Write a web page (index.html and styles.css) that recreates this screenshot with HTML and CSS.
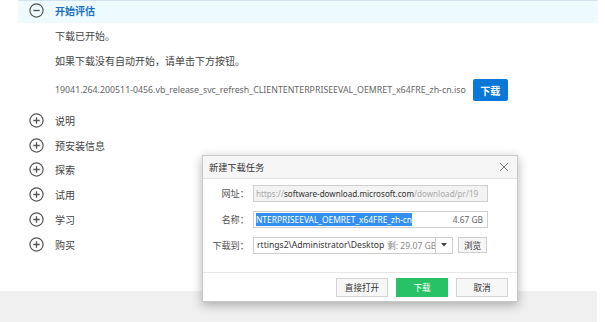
FILE: index.html
```html
<!DOCTYPE html>
<html lang="zh-CN">
<head>
    <meta charset="UTF-8">
    <title>下载 Windows 10 企业版评估</title>
    <link rel="stylesheet" href="styles.css">
</head>
<body>
    <div class="page">
        <div class="sec-head">
            <span class="ico">
                <svg width="15" height="15" viewBox="0 0 15 15"><circle cx="7.5" cy="7.5" r="6.6" fill="none" stroke="#555" stroke-width="1.2"/><path d="M4.3 7.5h6.4" stroke="#555" stroke-width="1.3"/></svg>
            </span>
            <span class="sec-title">开始评估</span>
        </div>
        <div class="sec-body">
            <p class="txt first">下载已开始。</p>
            <p class="txt">如果下载没有自动开始，请单击下方按钮。</p>
            <div class="file-row">
                <span class="file-name">19041.264.200511-0456.vb_release_svc_refresh_CLIENTENTERPRISEEVAL_OEMRET_x64FRE_zh-cn.iso</span>
                <span class="btn-blue">下载</span>
            </div>
        </div>
        <ul class="acc">
            <li class="acc-item"><span class="ico plus"><svg width="15" height="15" viewBox="0 0 15 15"><circle cx="7.5" cy="7.5" r="6.6" fill="none" stroke="#555" stroke-width="1.2"/><path d="M4.3 7.5h6.4M7.5 4.3v6.4" stroke="#555" stroke-width="1.3"/></svg></span>说明</li>
            <li class="acc-item"><span class="ico plus"><svg width="15" height="15" viewBox="0 0 15 15"><circle cx="7.5" cy="7.5" r="6.6" fill="none" stroke="#555" stroke-width="1.2"/><path d="M4.3 7.5h6.4M7.5 4.3v6.4" stroke="#555" stroke-width="1.3"/></svg></span>预安装信息</li>
            <li class="acc-item"><span class="ico plus"><svg width="15" height="15" viewBox="0 0 15 15"><circle cx="7.5" cy="7.5" r="6.6" fill="none" stroke="#555" stroke-width="1.2"/><path d="M4.3 7.5h6.4M7.5 4.3v6.4" stroke="#555" stroke-width="1.3"/></svg></span>探索</li>
            <li class="acc-item"><span class="ico plus"><svg width="15" height="15" viewBox="0 0 15 15"><circle cx="7.5" cy="7.5" r="6.6" fill="none" stroke="#555" stroke-width="1.2"/><path d="M4.3 7.5h6.4M7.5 4.3v6.4" stroke="#555" stroke-width="1.3"/></svg></span>试用</li>
            <li class="acc-item"><span class="ico plus"><svg width="15" height="15" viewBox="0 0 15 15"><circle cx="7.5" cy="7.5" r="6.6" fill="none" stroke="#555" stroke-width="1.2"/><path d="M4.3 7.5h6.4M7.5 4.3v6.4" stroke="#555" stroke-width="1.3"/></svg></span>学习</li>
            <li class="acc-item"><span class="ico plus"><svg width="15" height="15" viewBox="0 0 15 15"><circle cx="7.5" cy="7.5" r="6.6" fill="none" stroke="#555" stroke-width="1.2"/><path d="M4.3 7.5h6.4M7.5 4.3v6.4" stroke="#555" stroke-width="1.3"/></svg></span>购买</li>
        </ul>
    </div>
    <div class="foot"></div>

    <!-- 新建下载任务 弹窗 -->
    <div class="dlg">
        <div class="dlg-title">
            <span>新建下载任务</span>
            <svg class="dlg-close" width="10" height="10" viewBox="0 0 10 10"><path d="M1 1l8 8M9 1l-8 8" stroke="#777" stroke-width="1"/></svg>
        </div>
        <div class="dlg-body">
            <div class="frow">
                <label class="flabel">网址：</label>
                <div class="finput ro"><span class="dim">https://</span><span class="host">software-download.microsoft.com</span><span class="dim">/download/pr/19</span></div>
            </div>
            <div class="frow">
                <label class="flabel">名称：</label>
                <div class="finput name"><span class="sel">NTERPRISEEVAL_OEMRET_x64FRE_zh-cn</span><span class="size">4.67 GB</span></div>
            </div>
            <div class="frow">
                <label class="flabel">下载到：</label>
                <div class="combo">
                    <div class="combo-text"><span>rttings2\Administrator\Desktop</span><span class="free">剩: 29.07 GB</span></div>
                    <div class="combo-arrow"><svg width="6" height="4" viewBox="0 0 6 4"><path d="M0 0h6L3 3.5z" fill="#444"/></svg></div>
                </div>
                <span class="btn-small">浏览</span>
            </div>
        </div>
        <div class="dlg-foot">
            <span class="btn">直接打开</span>
            <span class="btn green">下载</span>
            <span class="btn">取消</span>
        </div>
    </div>
</body>
</html>
```

FILE: styles.css
```css
*{
    margin: 0;
    padding: 0;
    box-sizing: border-box;
}
body{
    width: 605px;
    height: 322px;
    overflow: hidden;
    background: #fff;
    font-family: "Noto Sans", "Noto Sans CJK SC", sans-serif;
    font-size: 10px;
    color: #444;
    position: relative;
}
.page{
    margin-left: 18px;
    width: 580px;
}
.sec-head{
    height: 23px;
    background: #edfbff;
    border-top: 1px solid #d3e4ee;
    display: flex;
    align-items: center;
    padding: 0 0 3px 11px;
}
.ico{
    display: flex;
    width: 15px;
    height: 15px;
    margin-right: 11px;
}
.sec-title{
    color: #1a70c0;
    font-weight: bold;
    font-size: 10px;
}
.sec-body{
    padding-left: 37px;
}
.txt{
    line-height: 16px;
    margin-top: 9px;
    color: #444;
}
.txt.first{
    margin-top: 5px;
}
.file-row{
    display: flex;
    align-items: center;
    margin-top: 10px;
    height: 22px;
}
.file-name{
    font-size: 8.8px;
    color: #666;
    white-space: nowrap;
}
.btn-blue{
    margin-left: 7px;
    width: 35px;
    height: 22px;
    background: #0b78d7;
    color: #fff;
    font-weight: bold;
    display: flex;
    align-items: center;
    justify-content: center;
    border-radius: 2px;
}
.acc{
    list-style: none;
    margin-top: 7px;
}
.acc-item{
    height: 24.8px;
    display: flex;
    align-items: center;
    padding-left: 11px;
}
.foot{
    margin-top: 34px;
    width: 597px;
    height: 40px;
    background: #f0f0f0;
}

.dlg{
    position: absolute;
    left: 202px;
    top: 155px;
    width: 316px;
    height: 147px;
    background: #fff;
    border: 1px solid #c8c8c8;
    box-shadow: 0 3px 10px rgba(0,0,0,.3);
    font-size: 9.2px;
    color: #333;
}
.dlg-title{
    height: 23px;
    background: #f6f6f6;
    border-bottom: 1px solid #e2e2e2;
    display: flex;
    align-items: center;
    justify-content: space-between;
    padding: 0 8px 0 6px;
}
.dlg-body{
    padding-top: 6px;
    height: 94px;
    border-bottom: 1px solid #e6e6e6;
}
.frow{
    display: flex;
    align-items: center;
    height: 16px;
    margin-bottom: 10px;
}
.flabel{
    width: 50px;
    text-align: right;
    padding-right: 4px;
    color: #555;
}
.finput{
    width: 235px;
    height: 17px;
    border: 1px solid #cfcfcf;
    display: flex;
    align-items: center;
    padding-left: 2px;
    white-space: nowrap;
    overflow: hidden;
    font-size: 8.4px;
}
.finput.ro{
    background: #f3f3f3;
    font-size: 8.1px;
}
.dim{
    color: #aaa;
}
.host{
    color: #333;
}
.sel{
    background: #3390f0;
    color: #fff;
    padding: 1px 0;
}
.size{
    margin-left: auto;
    padding-right: 4px;
    color: #666;
}
.combo{
    width: 200px;
    height: 17px;
    border: 1px solid #cfcfcf;
    display: flex;
    font-size: 8.6px;
}
.combo-text{
    flex: 1;
    display: flex;
    align-items: center;
    padding-left: 3px;
    white-space: nowrap;
    overflow: hidden;
    gap: 3px;
}
.free{
    color: #888;
}
.combo-arrow{
    width: 17px;
    border-left: 1px solid #cfcfcf;
    display: flex;
    align-items: center;
    justify-content: center;
}
.btn-small{
    margin-left: 5px;
    width: 29px;
    height: 16px;
    border: 1px solid #cfcfcf;
    background: #f6f6f6;
    display: flex;
    align-items: center;
    justify-content: center;
    font-size: 8.6px;
}
.dlg-foot{
    display: flex;
    justify-content: flex-end;
    gap: 8px;
    padding: 5px 9px 0 0;
}
.btn{
    width: 52px;
    height: 19px;
    border: 1px solid #d4d4d4;
    background: #f7f7f7;
    display: flex;
    align-items: center;
    justify-content: center;
    font-size: 8.6px;
    color: #333;
}
.btn.green{
    background: #27c266;
    border-color: #27c266;
    color: #fff;
}
```
